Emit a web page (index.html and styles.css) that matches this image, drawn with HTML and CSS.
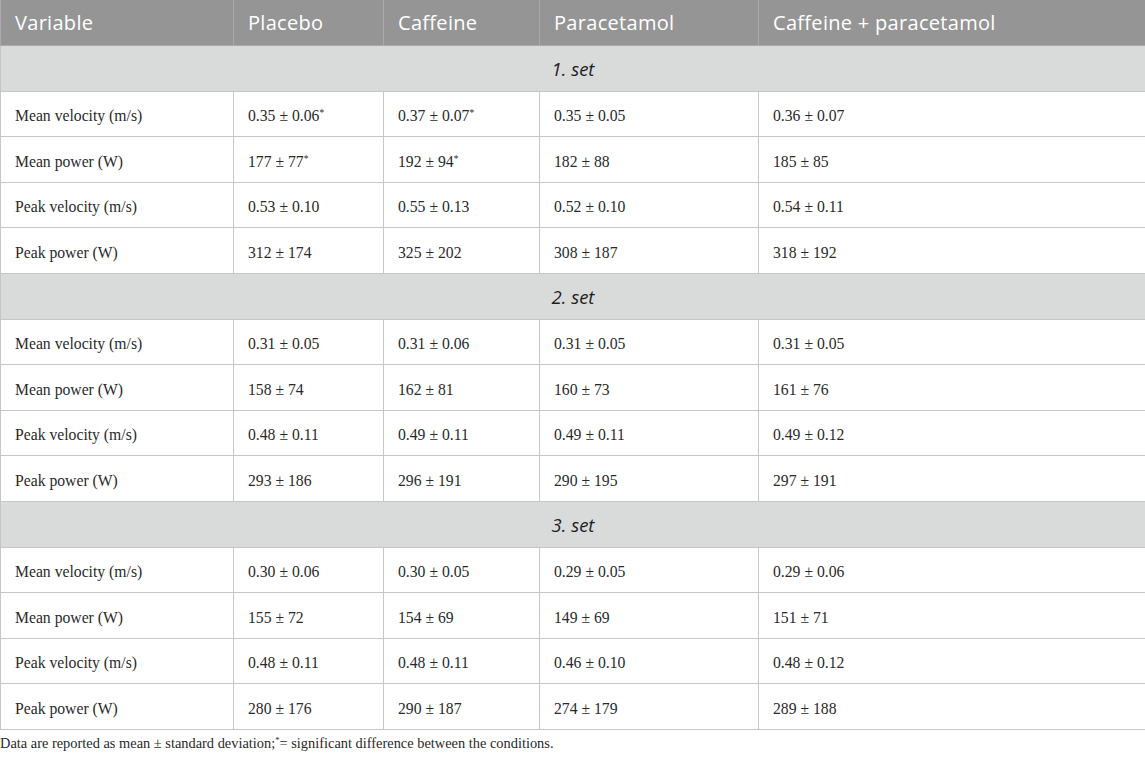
FILE: index.html
```html
<!DOCTYPE html>
<html>
<head>
<meta charset="utf-8">
<link rel="stylesheet" href="styles.css">
</head>
<body>
<table class="data">
  <colgroup>
    <col class="c1"><col class="c2"><col class="c3"><col class="c4"><col class="c5">
  </colgroup>
  <thead>
    <tr class="head">
      <th>Variable</th><th>Placebo</th><th>Caffeine</th><th>Paracetamol</th><th>Caffeine + paracetamol</th>
    </tr>
  </thead>
  <tbody>
    <tr class="sec"><td colspan="5">1. set</td></tr>
    <tr><td>Mean velocity (m/s)</td><td>0.35 ± 0.06<sup>*</sup></td><td>0.37 ± 0.07<sup>*</sup></td><td>0.35 ± 0.05</td><td>0.36 ± 0.07</td></tr>
    <tr><td>Mean power (W)</td><td>177 ± 77<sup>*</sup></td><td>192 ± 94<sup>*</sup></td><td>182 ± 88</td><td>185 ± 85</td></tr>
    <tr><td>Peak velocity (m/s)</td><td>0.53 ± 0.10</td><td>0.55 ± 0.13</td><td>0.52 ± 0.10</td><td>0.54 ± 0.11</td></tr>
    <tr><td>Peak power (W)</td><td>312 ± 174</td><td>325 ± 202</td><td>308 ± 187</td><td>318 ± 192</td></tr>
    <tr class="sec"><td colspan="5">2. set</td></tr>
    <tr><td>Mean velocity (m/s)</td><td>0.31 ± 0.05</td><td>0.31 ± 0.06</td><td>0.31 ± 0.05</td><td>0.31 ± 0.05</td></tr>
    <tr><td>Mean power (W)</td><td>158 ± 74</td><td>162 ± 81</td><td>160 ± 73</td><td>161 ± 76</td></tr>
    <tr><td>Peak velocity (m/s)</td><td>0.48 ± 0.11</td><td>0.49 ± 0.11</td><td>0.49 ± 0.11</td><td>0.49 ± 0.12</td></tr>
    <tr><td>Peak power (W)</td><td>293 ± 186</td><td>296 ± 191</td><td>290 ± 195</td><td>297 ± 191</td></tr>
    <tr class="sec"><td colspan="5">3. set</td></tr>
    <tr><td>Mean velocity (m/s)</td><td>0.30 ± 0.06</td><td>0.30 ± 0.05</td><td>0.29 ± 0.05</td><td>0.29 ± 0.06</td></tr>
    <tr><td>Mean power (W)</td><td>155 ± 72</td><td>154 ± 69</td><td>149 ± 69</td><td>151 ± 71</td></tr>
    <tr><td>Peak velocity (m/s)</td><td>0.48 ± 0.11</td><td>0.48 ± 0.11</td><td>0.46 ± 0.10</td><td>0.48 ± 0.12</td></tr>
    <tr><td>Peak power (W)</td><td>280 ± 176</td><td>290 ± 187</td><td>274 ± 179</td><td>289 ± 188</td></tr>
  </tbody>
</table>
<p class="note">Data are reported as mean ± standard deviation;<sup>*</sup>= significant difference between the conditions.</p>
</body>
</html>
```
FILE: styles.css
```css
html, body {
  margin: 0;
  padding: 0;
  background: #ffffff;
}
.data {
  width: 1145px;
  border-collapse: collapse;
  table-layout: fixed;
  font-family: "Liberation Serif", "Times New Roman", serif;
  font-size: 15.7px;
  color: #2a2a2a;
}
.c1 { width: 233px; }
.c2 { width: 150px; }
.c3 { width: 156px; }
.c4 { width: 219px; }
.c5 { width: 387px; }
.data th, .data td {
  border: 1px solid #c6c6c6;
  padding: 4px 14px 0 14px;
  text-align: left;
  vertical-align: middle;
  height: 45.6px;
  box-sizing: border-box;
}
.head th {
  background: #959595;
  color: #ffffff;
  font-family: "Open Sans", "Liberation Sans", sans-serif;
  font-weight: 400;
  font-size: 20px;
  letter-spacing: 0.3px;
  border-color: #aaaaaa;
  border-top: none;
  padding-top: 0;
}
.sec td {
  background: #d9dbda;
  text-align: center;
  font-family: "Open Sans", "Liberation Sans", sans-serif;
  font-style: italic;
  font-size: 18.5px;
  color: #1e1e1e;
  padding-top: 0;
}
.data sup, .note sup {
  font-size: 0.6em;
  line-height: 0;
  vertical-align: 0.55em;
}
.note {
  margin: 5px 0 0 0;
  font-family: "Liberation Serif", "Times New Roman", serif;
  font-size: 14.4px;
  color: #2a2a2a;
}
```
